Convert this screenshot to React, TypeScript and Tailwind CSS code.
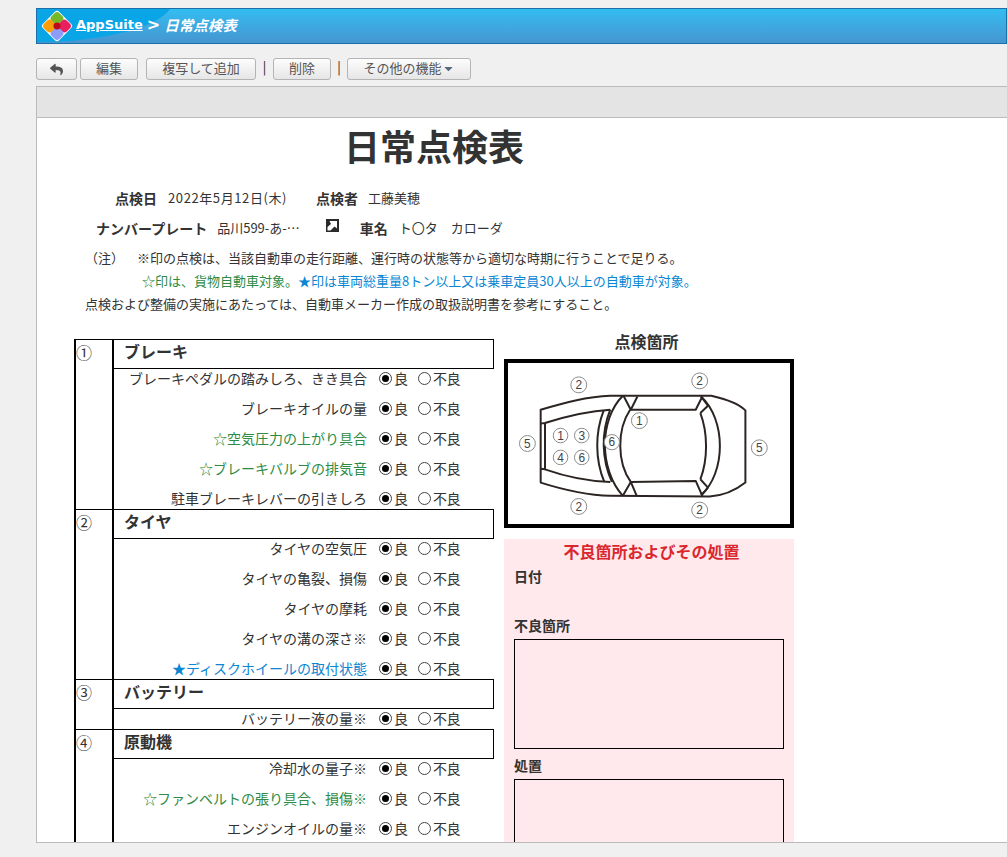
import { FaReply, FaCaretDown } from "react-icons/fa";

type Check = { label: string; tone?: "green" | "blue" };
type Section = { no: string; title: string; rows: Check[]; tail?: boolean };

const sections: Section[] = [
  {
    no: "①",
    title: "ブレーキ",
    rows: [
      { label: "ブレーキペダルの踏みしろ、きき具合" },
      { label: "ブレーキオイルの量" },
      { label: "☆空気圧力の上がり具合", tone: "green" },
      { label: "☆ブレーキバルブの排気音", tone: "green" },
      { label: "駐車ブレーキレバーの引きしろ" },
    ],
  },
  {
    no: "②",
    title: "タイヤ",
    rows: [
      { label: "タイヤの空気圧" },
      { label: "タイヤの亀裂、損傷" },
      { label: "タイヤの摩耗" },
      { label: "タイヤの溝の深さ※" },
      { label: "★ディスクホイールの取付状態", tone: "blue" },
    ],
  },
  { no: "③", title: "バッテリー", rows: [{ label: "バッテリー液の量※" }] },
  {
    no: "④",
    title: "原動機",
    tail: true,
    rows: [
      { label: "冷却水の量子※" },
      { label: "☆ファンベルトの張り具合、損傷※", tone: "green" },
      { label: "エンジンオイルの量※" },
    ],
  },
];

const Logo = () => (
  <svg width="32" height="32" viewBox="0 0 32 32" className="shrink-0">
    <rect x="4.5" y="4.5" width="23" height="23" rx="3" fill="#fff" transform="rotate(45 16 16)" />
    <rect x="10.5" y="3" width="11" height="11" rx="3.5" fill="#76b82a" transform="rotate(45 16 8.5)" />
    <rect x="18" y="10.5" width="11" height="11" rx="3.5" fill="#e8205f" transform="rotate(45 23.5 16)" />
    <rect x="10.5" y="18" width="11" height="11" rx="3.5" fill="#8c9cf8" transform="rotate(45 16 23.5)" />
    <rect x="3" y="10.5" width="11" height="11" rx="3.5" fill="#fb9d09" transform="rotate(45 8.5 16)" />
    <circle cx="16" cy="16" r="3.5" fill="#b80c18" />
  </svg>
);

const Button = ({ children, className }: { children: React.ReactNode; className: string }) => (
  <button
    className={`flex h-[22px] items-center justify-center rounded-[3px] border border-[#b4b4b4] bg-gradient-to-b from-[#fdfdfd] to-[#e6e6e6] pb-[3px] text-[13px] leading-none text-[#555] ${className}`}
  >
    {children}
  </button>
);

const Radio = ({ checked }: { checked?: boolean }) => (
  <span className="flex h-[13px] w-[13px] shrink-0 items-center justify-center rounded-full border border-[#444] bg-white">
    {checked && <span className="h-[7px] w-[7px] rounded-full bg-black" />}
  </span>
);

const CheckRow = ({ label, tone }: Check) => (
  <div className="flex h-5 items-center">
    <div
      className={`w-[253px] whitespace-nowrap text-right text-[14px] leading-5 ${
        tone === "green" ? "text-[#2e8b45]" : tone === "blue" ? "text-[#0a86d2]" : "text-[#333]"
      }`}
    >
      {label}
    </div>
    <div className="ml-[12px] flex items-center text-[14px] leading-5 text-[#333]">
      <Radio checked />
      <span className="ml-[2px] w-[24px]">良</span>
      <Radio />
      <span className="ml-[2px] tracking-[-0.5px]">不良</span>
    </div>
  </div>
);

const SectionBlock = ({ no, title, rows, tail }: Section) => (
  <div className="flex">
    <div className="w-[40px] shrink-0 border-x-2 border-t border-black text-[16px] leading-[24px] text-[#333]">
      {no}
    </div>
    <div className="min-w-0 flex-1">
      <div className="-ml-[2px] flex h-[30px] items-center border border-black pb-[6px] pl-[11px] text-[16px] leading-5 font-bold text-[#333]">
        {title}
      </div>
      <div className={`-mt-px flex flex-col gap-[10px] ${tail ? "pb-10" : "pb-px"}`}>
        {rows.map((r) => (
          <CheckRow key={r.label} {...r} />
        ))}
      </div>
    </div>
  </div>
);

const marks: [number, number, string, number][] = [
  [235, 165, "2", 24],
  [600, 153, "2", 24],
  [235, 532, "2", 24],
  [600, 543, "2", 24],
  [80, 342, "5", 24],
  [780, 355, "5", 24],
  [418, 273, "1", 24],
  [180, 318, "1", 22],
  [244, 318, "3", 22],
  [180, 384, "4", 22],
  [244, 384, "6", 22],
  [335, 338, "6", 23],
];

const CarDiagram = () => (
  <svg viewBox="24 99 846 486" className="block h-full w-full">
    <g fill="none" stroke="#2b2422" strokeWidth="6" strokeLinejoin="round">
      <path d="M120 240C190 220 260 200 330 198L635 198C680 208 720 225 738 242L738 460C710 482 670 500 630 502L330 500C260 498 190 482 120 460Z" />
      <path d="M120 282L133 280C190 262 260 244 330 240" />
      <path d="M120 418L133 420C190 440 260 456 330 458" />
      <path d="M133 280L133 420" />
      <path d="M310 243C284 310 284 390 312 458" />
      <path d="M330 240C302 310 304 390 335 458" />
      <path d="M368 198C296 270 296 420 368 500" />
      <path d="M390 240C350 300 350 400 392 458" />
      <path d="M370 198L392 240L412 200" />
      <path d="M368 500L392 458L410 500" />
      <path d="M392 240L588 240L608 200" />
      <path d="M392 458L588 455L608 500" />
      <path d="M604 200C680 270 680 430 604 498" />
      <path d="M602 250C625 310 625 390 602 450" />
      <path d="M604 200L625 228L602 250" />
      <path d="M602 450L625 475L606 498" />
    </g>
    {marks.map(([x, y, t, r]) => (
      <g key={`${x}-${y}`}>
        <circle cx={x} cy={y} r={r} fill="#fff" stroke="#8a8a8a" strokeWidth="3" />
        <text x={x} y={y + 13} textAnchor="middle" fontSize="36" fill="#444" fontFamily="'Liberation Sans', sans-serif">
          {t}
        </text>
      </g>
    ))}
  </svg>
);

export default function App() {
  return (
    <div className="flex h-[857px] flex-col overflow-hidden bg-[#f0f0f0] pt-2 pl-9 font-['Noto_Sans_CJK_JP',sans-serif] text-[#333]">
      {/* title bar */}
      <div className="relative flex h-9 shrink-0 items-center overflow-hidden border border-[#1c6ea6] bg-gradient-to-b from-[#31bdf1] to-[#4595d0]">
        <div className="absolute -top-[53px] -left-[137px] h-[86px] w-[274px] rounded-[50%] bg-[#0aa5e6]" />
        <div className="relative ml-[4px] flex items-center">
          <Logo />
          <a className="mb-[3px] ml-[3px] font-['DejaVu_Sans',sans-serif] text-[13px] font-bold text-white underline">AppSuite</a>
          <span className="mb-[2px] ml-[4px] font-['DejaVu_Sans',sans-serif] text-[16px] font-bold text-white">&gt;</span>
          <span className="mb-[2px] ml-[4px] text-[14.5px] font-bold text-white italic">日常点検表</span>
        </div>
      </div>

      {/* toolbar */}
      <div className="mt-[14px] flex h-[22px] shrink-0 items-center">
        <Button className="w-[41px] text-[#444]">
          <FaReply size={13} className="mt-[3px]" />
        </Button>
        <Button className="ml-[3px] w-[58px]">編集</Button>
        <Button className="ml-2 w-[110px]">複写して追加</Button>
        <span className="mb-1 w-[17px] text-center text-[13px] text-[#222]">|</span>
        <Button className="w-[58px]">削除</Button>
        <span className="mb-1 w-4 text-center text-[13px] text-[#222]">|</span>
        <Button className="w-[124px]">
          その他の機能
          <FaCaretDown size={13} className="mt-[2px] text-[#5a6a85]" />
        </Button>
      </div>

      {/* panel */}
      <div className="mt-[6px] mb-[14px] min-h-0 flex-1 overflow-hidden border-y border-l border-[#bbb] bg-white">
        <div className="h-[31px] border-b border-[#bbb] bg-[#e4e4e4]" />

        <h1 className="mt-[6px] ml-[307px] text-[36px] leading-[42px] font-bold text-[#333]">日常点検表</h1>

        <div className="mt-[22px] ml-[78px] flex items-center leading-5">
          <b className="text-[14px]">点検日</b>
          <span className="ml-[11px] text-[13px] tracking-[0.6px]">2022年5月12日(木)</span>
          <b className="ml-[29px] text-[14px]">点検者</b>
          <span className="ml-[10px] text-[13px]">工藤美穂</span>
        </div>

        <div className="mt-[10px] ml-[59px] flex items-center leading-5">
          <b className="text-[14px]">ナンバープレート</b>
          <span className="ml-[10px] text-[13px]">品川599-あ-…</span>
          <svg width="13" height="13" viewBox="0 0 13 13" className="mb-[5px] ml-[26px]">
            <rect width="13" height="13" fill="#2a2a2a" />
            <path d="M1.5 11.5L1.5 8L5 5L3.5 2L11 2L11 9.5L8.5 7.5L4.5 11.5Z" fill="#fff" />
          </svg>
          <b className="ml-[21px] text-[14px]">車名</b>
          <span className="ml-[11px] text-[13px]">ト〇タ　カローダ</span>
        </div>

        <div className="mt-[8px] ml-[48px] text-[13px] leading-[23px] whitespace-nowrap">
          <div className="flex">
            <span className="w-[52px]">（注）</span>
            <span>※印の点検は、当該自動車の走行距離、運行時の状態等から適切な時期に行うことで足りる。</span>
          </div>
          <div className="ml-[57px]">
            <span className="text-[#2e8b45]">☆印は、貨物自動車対象。</span>
            <span className="text-[#0a86d2]">★印は車両総重量8トン以上又は乗車定員30人以上の自動車が対象。</span>
          </div>
          <div>点検および整備の実施にあたっては、自動車メーカー作成の取扱説明書を参考にすること。</div>
        </div>

        <div className="mt-[24px] ml-[37px] flex gap-[10px]">
          <div className="w-[420px] shrink-0">
            {sections.map((s) => (
              <SectionBlock key={s.no} {...s} />
            ))}
          </div>

          <div className="w-[290px] shrink-0">
            <div className="-mt-[9px] h-[29px] pr-[5px] text-center text-[16px] leading-[22px] font-bold">点検箇所</div>
            <div className="h-[169px] border-[4px] border-black bg-white">
              <CarDiagram />
            </div>
            <div className="mt-[11px] bg-[#ffe9ec] px-[10px] pb-10">
              <div className="pt-[2px] pl-[5px] text-center text-[16px] leading-[20px] font-bold text-[#d9272e]">
                不良箇所およびその処置
              </div>
              <div className="mt-[5px] h-[39px] text-[14px] leading-5 font-bold">日付</div>
              <div className="mt-[10px] h-[24px] text-[14px] leading-5 font-bold">不良箇所</div>
              <div className="h-[110px] border border-black" />
              <div className="mt-[6px] h-[24px] text-[14px] leading-5 font-bold">処置</div>
              <div className="h-[110px] border border-black" />
            </div>
          </div>
        </div>
      </div>
    </div>
  );
}
